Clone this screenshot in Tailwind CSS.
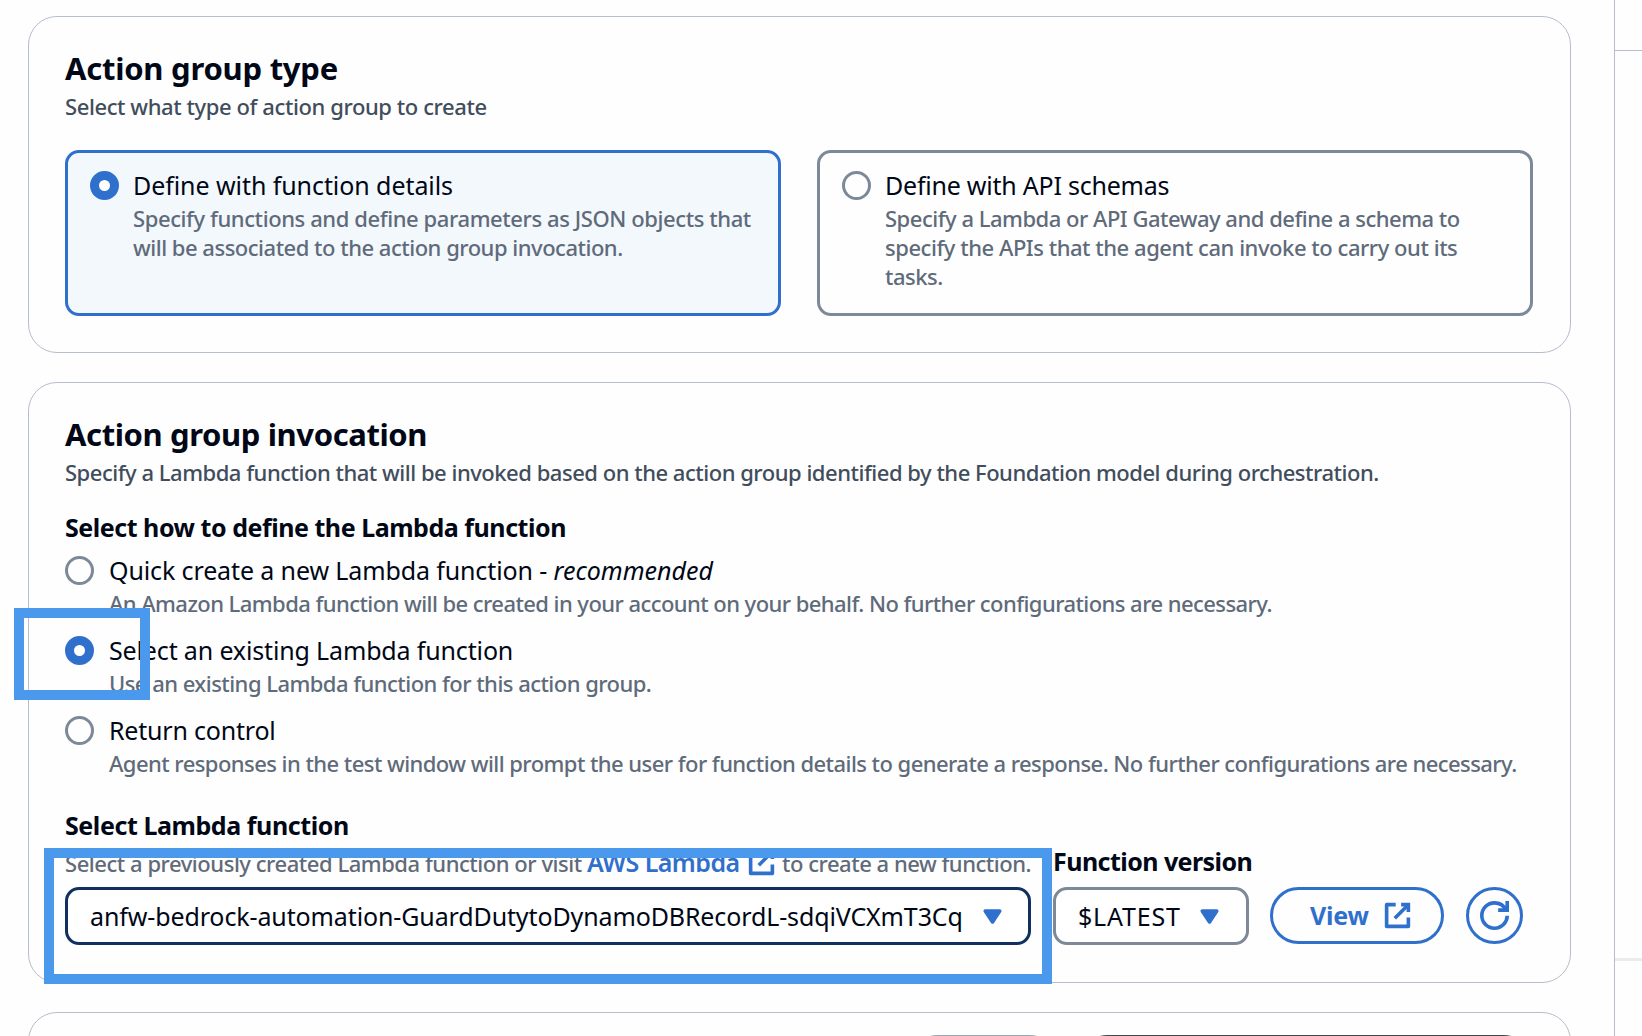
<!DOCTYPE html>
<html lang="en">
<head>
<meta charset="utf-8">
<title>Action group</title>
<script src="https://cdn.jsdelivr.net/npm/@tailwindcss/browser@4"></script>
</head>
<body class="relative h-[1036px] w-[1642px] overflow-hidden bg-[#fefefe] font-['Noto_Sans','Open_Sans',sans-serif] text-[#000716]">
<div class="flex h-full">
  <main class="flex h-full w-[1614px] shrink-0 flex-col gap-[29px] pt-4 pr-[43px] pl-7 whitespace-nowrap">

    <!-- Action group type -->
    <section class="h-[337px] shrink-0 rounded-[29px] border border-[#b6becb] px-9 pt-[33px]">
      <h2 class="text-[31px] leading-[36px] font-bold tracking-[-0.24px]">Action group type</h2>
      <p class="mt-1.5 text-[22px] leading-[28px] font-medium tracking-[-0.41px] text-[#414d5c]">Select what type of action group to create</p>
      <div class="mt-[30px] grid w-[1468px] grid-cols-2 gap-9">
        <label class="flex h-[166px] gap-3.5 rounded-[14px] border-3 border-[#3070cd] bg-[#f3f8fd] pt-[18px] pl-[22px]">
          <span class="size-[29px] shrink-0 rounded-full border-9 border-[#3070cd] bg-white"></span>
          <span>
            <span class="block text-[25px] leading-[29px] tracking-[-0.07px]">Define with function details</span>
            <span class="mt-1 block text-[22px] leading-[29px] font-medium tracking-[-0.41px] text-[#5f6b7a]">Specify functions and define parameters as JSON objects that<br><span class="tracking-[-0.49px]">will be associated to the action group invocation.</span></span>
          </span>
        </label>
        <label class="flex h-[166px] gap-3.5 rounded-[14px] border-3 border-[#7d8998] pt-[18px] pl-[22px]">
          <span class="size-[29px] shrink-0 rounded-full border-3 border-[#7d8998]"></span>
          <span>
            <span class="block text-[25px] leading-[29px] tracking-[-0.23px]">Define with API schemas</span>
            <span class="mt-1 block text-[22px] leading-[29px] font-medium tracking-[-0.49px] text-[#5f6b7a]">Specify a Lambda or API Gateway and define a schema to<br><span class="tracking-[-0.46px]">specify the APIs that the agent can invoke to carry out its</span><br>tasks.</span>
          </span>
        </label>
      </div>
    </section>

    <!-- Action group invocation -->
    <section class="h-[601px] shrink-0 rounded-[29px] border border-[#b6becb] px-9 pt-[33px]">
      <h2 class="text-[31px] leading-[36px] font-bold tracking-[-0.39px]">Action group invocation</h2>
      <p class="mt-1.5 text-[22px] leading-[28px] font-medium tracking-[-0.48px] text-[#414d5c]">Specify a Lambda function that will be invoked based on the action group identified by the Foundation model during orchestration.</p>

      <h3 class="mt-[27px] text-[25px] leading-[29px] font-bold tracking-[-0.46px]">Select how to define the Lambda function</h3>
      <div class="mt-3.5 flex flex-col gap-[18px]">
        <label class="flex gap-[15px]">
          <span class="size-[29px] shrink-0 rounded-full border-3 border-[#7d8998]"></span>
          <span>
            <span class="block text-[25px] leading-[29px] tracking-[-0.12px]">Quick create a new Lambda function - <em class="tracking-normal">recommended</em></span>
            <span class="mt-1 block text-[22px] leading-[29px] font-medium tracking-[-0.56px] text-[#5f6b7a]">An Amazon Lambda function will be created in your account on your behalf. No further configurations are necessary.</span>
          </span>
        </label>
        <label class="flex gap-[15px]">
          <span class="size-[29px] shrink-0 rounded-full border-9 border-[#3070cd] bg-white"></span>
          <span>
            <span class="block text-[25px] leading-[29px] tracking-[-0.15px]">Select an existing Lambda function</span>
            <span class="mt-1 block text-[22px] leading-[29px] font-medium tracking-[-0.53px] text-[#5f6b7a]">Use an existing Lambda function for this action group.</span>
          </span>
        </label>
        <label class="flex gap-[15px]">
          <span class="size-[29px] shrink-0 rounded-full border-3 border-[#7d8998]"></span>
          <span>
            <span class="block text-[25px] leading-[29px] tracking-[-0.2px]">Return control</span>
            <span class="mt-1 block text-[22px] leading-[29px] font-medium tracking-[-0.55px] text-[#5f6b7a]">Agent responses in the test window will prompt the user for function details to generate a response. No further configurations are necessary.</span>
          </span>
        </label>
      </div>

      <div class="mt-[33px] flex items-end">
        <div class="w-[966px]">
          <h3 class="text-[25px] leading-[29px] font-bold tracking-[-0.42px]">Select Lambda function</h3>
          <div class="mt-2 flex h-7 items-baseline text-[22px] leading-[28px] font-medium text-[#5f6b7a]">
            <span class="w-[522px] shrink-0 tracking-[-0.46px]">Select a previously created Lambda function or visit</span>
            <a class="flex w-[195px] shrink-0 items-baseline gap-[7px] text-[25px] leading-[28px] font-semibold tracking-[-0.55px] text-[#3070cd]">AWS Lambda
              <svg class="size-[29px] shrink-0 self-end" viewBox="0 0 16 16" fill="none" stroke="currentColor" stroke-width="2"><path d="M10 2h4v4"/><path d="m6.5 9.5 7.3-7.3"/><path stroke-linejoin="round" d="M14 9.05V14H2V2h5"/></svg>
            </a>
            <span class="tracking-[-0.47px]">to create a new function.</span>
          </div>
          <div class="mt-[11px] flex h-[58px] items-center justify-between rounded-[14px] border-3 border-[#11305f] bg-white pr-[21px] pl-[22px]">
            <span class="text-[25px] leading-[52px] tracking-[-0.12px]">anfw-bedrock-automation-GuardDutytoDynamoDBRecordL-sdqiVCXmT3Cq</span>
            <svg class="size-[29px] text-[#3070cd]" viewBox="0 0 16 16" fill="currentColor" stroke="currentColor" stroke-width="2" stroke-linejoin="round"><path d="M4 5h8l-4 6z"/></svg>
          </div>
        </div>

        <div class="ml-[22px] w-[196px]">
          <h3 class="text-[25px] leading-[29px] font-bold tracking-[-0.55px]">Function version</h3>
          <div class="mt-[11px] flex h-[58px] items-center justify-between rounded-[14px] border-3 border-[#7d8998] bg-white pr-[22px] pl-[22px]">
            <span class="text-[25px] leading-[52px] tracking-[0.8px]">$LATEST</span>
            <svg class="size-[29px] text-[#3070cd]" viewBox="0 0 16 16" fill="currentColor" stroke="currentColor" stroke-width="2" stroke-linejoin="round"><path d="M4 5h8l-4 6z"/></svg>
          </div>
        </div>

        <button class="mb-px ml-[21px] flex h-[57px] w-[174px] items-center rounded-full border-3 border-[#3070cd] pl-[37px] text-[25px] leading-[51px] font-bold tracking-[-0.2px] text-[#3070cd]">
          <span class="w-[73px] text-left">View</span>
          <svg class="size-[29px]" viewBox="0 0 16 16" fill="none" stroke="currentColor" stroke-width="2"><path d="M10 2h4v4"/><path d="m6.5 9.5 7.3-7.3"/><path stroke-linejoin="round" d="M14 9.05V14H2V2h5"/></svg>
        </button>
        <button class="mb-px ml-[22px] flex size-[57px] items-center justify-center rounded-full border-3 border-[#3070cd] text-[#3070cd]">
          <svg class="size-[29px]" viewBox="0 0 16 16" fill="none" stroke="currentColor" stroke-width="2"><path d="M15 0v5h-5"/><path d="M15 8.2c0 3.7-3.1 6.8-7 6.8s-7-3.1-7-7 3.1-7 7-7c2.8 0 5.2 1.6 6.3 4"/></svg>
        </button>
      </div>
    </section>

    <!-- Next section, cut off by the fold -->
    <div class="min-h-0 flex-1 overflow-hidden">
      <section class="h-[100px] rounded-[29px] border border-[#b6becb] px-9 pt-[22px]">
        <div class="ml-[844px] flex gap-[21px]">
          <div class="h-[57px] w-[149px] rounded-full border-3 border-[#9aa3b2]"></div>
          <div class="h-[57px] w-[453px] rounded-full border-3 border-[#424650]"></div>
        </div>
      </section>
    </div>
  </main>

  <aside class="flex h-full flex-1 flex-col border-l border-[#b6becb]">
    <div class="h-[51px] border-b border-[#b6becb]"></div>
    <div class="h-[910px] border-b-3 border-[#e9ebed]"></div>
  </aside>
</div>

<!-- Highlight frames over the page -->
<div class="absolute top-[608px] left-[14px] h-[92px] w-[136px] border-10 border-[#4a99ec]"></div>
<div class="absolute top-[848px] left-[44px] h-[136px] w-[1008px] border-10 border-[#4a99ec]"></div>
</body>
</html>
